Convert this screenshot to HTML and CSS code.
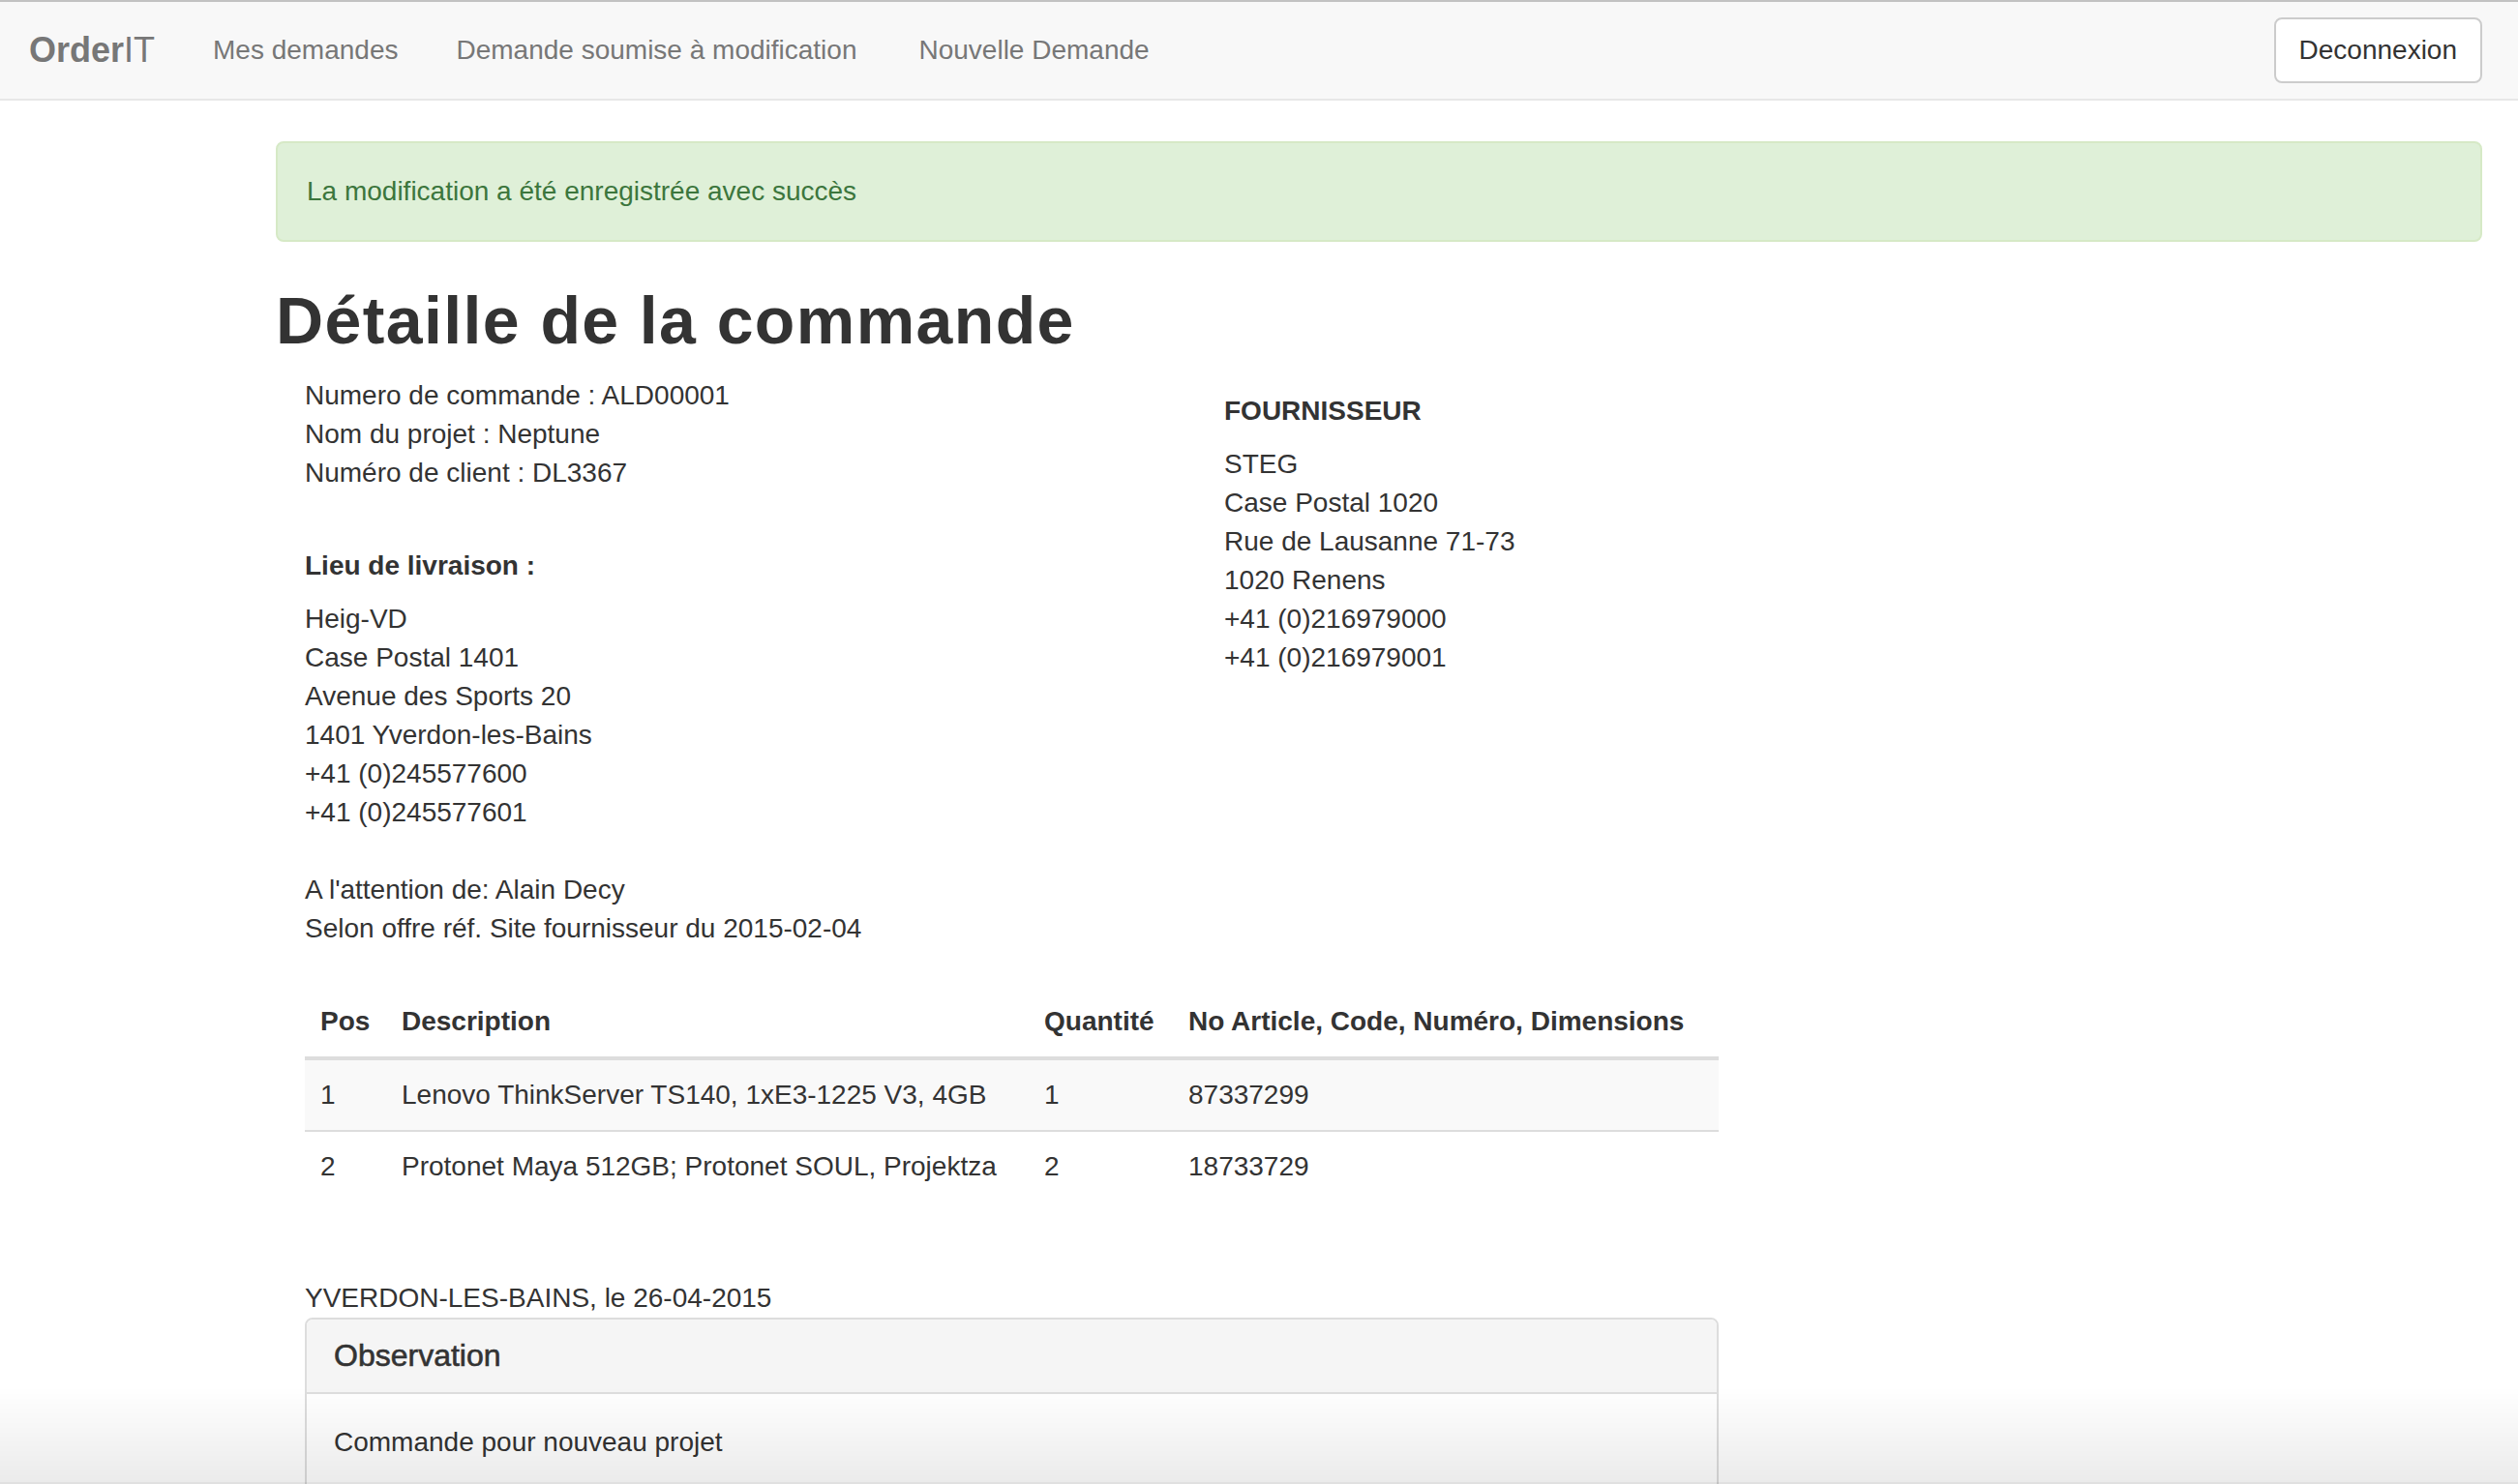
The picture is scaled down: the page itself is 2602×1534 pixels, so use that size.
FILE: index.html
```html
<!DOCTYPE html>
<html lang="fr">
<head>
<meta charset="utf-8">
<title>OrderIT - Détaille de la commande</title>
<link rel="stylesheet" href="styles.css">
</head>
<body>
<nav class="navbar">
  <a class="brand" href="#"><b>Order</b>IT</a>
  <ul class="nav-links">
    <li><a href="#">Mes demandes</a></li>
    <li><a href="#">Demande soumise à modification</a></li>
    <li><a href="#">Nouvelle Demande</a></li>
  </ul>
  <button class="btn-logout" type="button">Deconnexion</button>
</nav>

<main class="main">
  <div class="alert">La modification a été enregistrée avec succès</div>
  <h1 class="title">Détaille de la commande</h1>

  <div class="details">
    <div class="col-left">
      <div class="lines">
        <div>Numero de commande : ALD00001</div>
        <div>Nom du projet : Neptune</div>
        <div>Numéro de client : DL3367</div>
      </div>
      <h5 class="subhead subhead-gap">Lieu de livraison :</h5>
      <div class="lines">
        <div>Heig-VD</div>
        <div>Case Postal 1401</div>
        <div>Avenue des Sports 20</div>
        <div>1401 Yverdon-les-Bains</div>
        <div>+41 (0)245577600</div>
        <div>+41 (0)245577601</div>
      </div>
      <div class="lines gap-line">
        <div>A l'attention de: Alain Decy</div>
        <div>Selon offre réf. Site fournisseur du 2015-02-04</div>
      </div>
    </div>
    <div class="col-right">
      <h5 class="subhead">FOURNISSEUR</h5>
      <div class="lines">
        <div>STEG</div>
        <div>Case Postal 1020</div>
        <div>Rue de Lausanne 71-73</div>
        <div>1020 Renens</div>
        <div>+41 (0)216979000</div>
        <div>+41 (0)216979001</div>
      </div>
    </div>
  </div>

  <div class="narrow">
    <table class="table">
      <thead>
        <tr>
          <th class="c-pos">Pos</th>
          <th class="c-desc">Description</th>
          <th class="c-qty">Quantité</th>
          <th class="c-art">No Article, Code, Numéro, Dimensions</th>
        </tr>
      </thead>
      <tbody>
        <tr class="striped">
          <td>1</td>
          <td>Lenovo ThinkServer TS140, 1xE3-1225 V3, 4GB</td>
          <td>1</td>
          <td>87337299</td>
        </tr>
        <tr>
          <td>2</td>
          <td>Protonet Maya 512GB; Protonet SOUL, Projektza</td>
          <td>2</td>
          <td>18733729</td>
        </tr>
      </tbody>
    </table>

    <div class="place-date">YVERDON-LES-BAINS, le 26-04-2015</div>

    <div class="panel">
      <div class="panel-heading"><h3 class="panel-title">Observation</h3></div>
      <div class="panel-body">Commande pour nouveau projet</div>
    </div>
  </div>
</main>

<div class="window-shade"></div>
</body>
</html>
```
FILE: styles.css
```css
* { box-sizing: border-box; }

html, body {
  margin: 0;
  padding: 0;
  background: #fff;
}

body {
  font-family: "Liberation Sans", Arial, Helvetica, sans-serif;
  font-size: 28px;
  line-height: 40px;
  color: #333;
}

/* ---------- navbar ---------- */
.navbar {
  display: flex;
  align-items: center;
  height: 104px;
  background: #f8f8f8;
  border-top: 2px solid #c2c2c2;
  border-bottom: 2px solid #e7e7e7;
  padding-right: 37px;
}

.brand {
  padding: 0 30px;
  font-size: 36px;
  line-height: 40px;
  color: #777;
  text-decoration: none;
}
.brand b { font-weight: bold; }

.nav-links {
  display: flex;
  list-style: none;
  margin: 0;
  padding: 0;
}
.nav-links a {
  display: block;
  padding: 0 30px;
  color: #777;
  text-decoration: none;
  font-size: 28px;
  line-height: 40px;
}
.nav-links li:last-child a { padding-left: 34px; }

.btn-logout {
  margin-left: auto;
  font-family: inherit;
  font-size: 28px;
  line-height: 40px;
  color: #333;
  background: #fff;
  border: 2px solid #ccc;
  border-radius: 8px;
  padding: 12px 24px;
}

/* ---------- main ---------- */
.main {
  padding: 42px 37px 0 285px;
}

.alert {
  padding: 30px 30px;
  background: #dff0d8;
  border: 2px solid #d6e9c6;
  border-radius: 8px;
  color: #3c763d;
}

.title {
  margin: 42px 0 19px;
  font-size: 68px;
  line-height: 78px;
  font-weight: bold;
  letter-spacing: 1.4px;
  color: #333;
}

.details {
  display: flex;
  padding-left: 30px;
}
.col-left { width: 950px; }
.col-right { flex: 1; }

.subhead {
  margin: 20px 0;
  font-size: 28px;
  line-height: 31px;
  font-weight: bold;
}
.subhead-gap { margin-top: 60px; }
.gap-line { margin-top: 40px; }

/* ---------- table ---------- */
.narrow {
  width: 1461px;
  margin-left: 30px;
}

.table {
  width: 100%;
  border-collapse: collapse;
  margin-top: 40px;
  table-layout: fixed;
}
.table th,
.table td {
  padding: 16px;
  text-align: left;
  vertical-align: top;
  line-height: 40px;
  white-space: nowrap;
}
.table th {
  font-weight: bold;
  vertical-align: bottom;
  border-bottom: 4px solid #ddd;
}
.table tbody tr + tr td { border-top: 2px solid #ddd; }
.table tr.striped { background: #f9f9f9; }

.c-pos { width: 84px; }
.c-desc { width: 664px; }
.c-qty { width: 149px; }

.place-date {
  margin-top: 80px;
  line-height: 40px;
}

/* ---------- panel ---------- */
.panel {
  border: 2px solid #ddd;
  border-radius: 8px;
  margin-bottom: 40px;
}
.panel-heading {
  background: #f5f5f5;
  border-bottom: 2px solid #ddd;
  padding: 20px 28px;
  border-radius: 6px 6px 0 0;
}
.panel-title {
  margin: 0;
  font-size: 32px;
  line-height: 35px;
  font-weight: normal;
  color: #333;
  -webkit-text-stroke: 0.6px #333;
}
.panel-body {
  padding: 30px 28px;
}

/* ---------- window bottom shade (overlay) ---------- */
.window-shade {
  position: fixed;
  left: 0;
  right: 0;
  bottom: 0;
  height: 100px;
  pointer-events: none;
  background: linear-gradient(to bottom, rgba(0, 0, 0, 0), rgba(0, 0, 0, 0.08));
  border-bottom: 2px solid rgba(0, 0, 0, 0.12);
}
```
